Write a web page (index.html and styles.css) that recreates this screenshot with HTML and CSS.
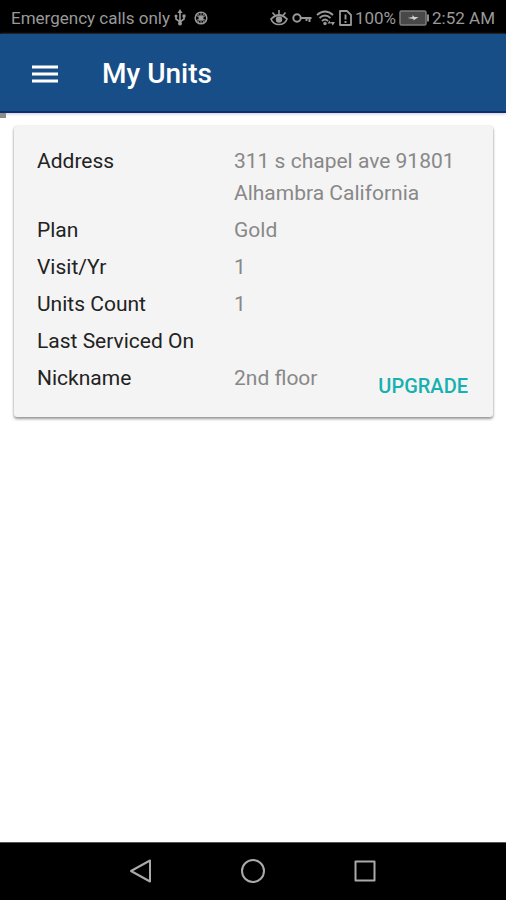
FILE: index.html
```html
<!DOCTYPE html>
<html lang="en">
<head>
<meta charset="utf-8">
<meta name="viewport" content="width=device-width, initial-scale=1">
<title>My Units</title>
<link rel="stylesheet" href="styles.css">
</head>
<body>
<div class="status-bar">
  <div class="status-group status-left">
    <span>Emergency calls only</span>
    <svg class="icon-usb" width="12" height="18" viewBox="0 0 12 18" aria-hidden="true"><path d="M6 3v11M2 7v3l4 3 4-3V7" fill="none" stroke="currentColor" stroke-width="1.6"/><path d="M6 0l2.500 4h-5z" fill="currentColor"/><circle cx="2" cy="7" r="1.500" fill="currentColor"/><path d="M8.500 5.500h3v3h-3z" fill="currentColor"/><circle cx="6" cy="14.500" r="2" fill="currentColor"/></svg>
    <svg width="14" height="14" viewBox="0 0 14 14" aria-hidden="true"><circle cx="7" cy="7" r="5.800" fill="none" stroke="currentColor" stroke-width="1.500"/><path d="M7 2v10M2.500 4.500l9 5M2.500 9.500l9-5M4 3l6 8M10 3l-6 8" stroke="currentColor" stroke-width="1.200" opacity=".8"/><circle cx="7" cy="7" r="2.500" fill="currentColor"/></svg>
  </div>
  <div class="status-group status-right">
    <div class="status-group status-icons">
      <svg width="18" height="16" viewBox="0 0 18 16" aria-hidden="true"><path d="M1 9q8-8 16 0-2 5.500-8 5.500T1 9z" fill="none" stroke="currentColor" stroke-width="1.700"/><circle cx="9" cy="9.500" r="3.200" fill="currentColor"/><path d="M9 0v4M2.500 2.500l2.500 3M15.500 2.500l-2.500 3" stroke="currentColor" stroke-width="1.600"/></svg>
      <svg width="20" height="12" viewBox="0 0 20 12" aria-hidden="true"><path d="M9 6h10.500M17.500 6v4M14.500 6v3" fill="none" stroke="currentColor" stroke-width="2"/><circle cx="5" cy="6" r="3.700" fill="none" stroke="currentColor" stroke-width="2"/></svg>
      <svg width="19" height="16" viewBox="0 0 19 16" aria-hidden="true"><path d="M1 5q8-7 16 0M3.500 8q5.500-5 11 0M6 11q3-3 6 0" fill="none" stroke="currentColor" stroke-width="1.900"/><circle cx="9" cy="13.500" r="1.700" fill="currentColor"/><path d="M11.500 13.500l2-3 1.500 3zM14.500 12h4.500l-2.200 3.500z" fill="currentColor"/></svg>
      <svg width="13" height="16" viewBox="0 0 13 16" aria-hidden="true"><path d="M1 1h7l4 4v10H1z" fill="none" stroke="currentColor" stroke-width="1.800" stroke-linejoin="round"/><path d="M6.500 4.500v5M6.500 11v2" stroke="currentColor" stroke-width="1.900"/></svg>
    </div>
    <span>100%</span>
    <svg width="30" height="16" viewBox="0 0 30 16" aria-hidden="true"><rect x="1" y="1" width="26" height="14" rx="1.500" fill="#484848" stroke="#7c7c7c" stroke-width="1.500"/><path d="M28 4.500h2v7h-2z" fill="#8c8c8c"/><path d="M8.500 8l5-1V5l2 2h4l-5 3.500V9z" fill="#d0d0d0"/></svg>
    <span>2:52 AM</span>
  </div>
</div>

<header class="app-bar">
  <button class="menu-button" type="button" aria-label="Open menu">
    <svg width="26" height="18" viewBox="0 0 26 18" aria-hidden="true"><path d="M0 2h26M0 9h26M0 16h26" stroke="currentColor" stroke-width="3"/></svg>
  </button>
  <h1 class="title">My Units</h1>
</header>

<main class="content">
  <div class="scroll-mark"></div>
  <section class="card">
    <dl class="details">
      <dt>Address</dt><dd>311 s chapel ave 91801 Alhambra California</dd>
      <dt>Plan</dt><dd>Gold</dd>
      <dt>Visit/Yr</dt><dd>1</dd>
      <dt>Units Count</dt><dd>1</dd>
      <dt>Last Serviced On</dt><dd></dd>
      <dt>Nickname</dt><dd>2nd floor</dd>
    </dl>
    <button class="upgrade" type="button">UPGRADE</button>
  </section>
</main>

<nav class="nav-bar" aria-label="System">
  <button type="button" aria-label="Back"><svg width="24" height="26" viewBox="0 0 24 26" aria-hidden="true"><path d="M21 2.500v21L2 13z"/></svg></button>
  <button type="button" aria-label="Home"><svg width="26" height="26" viewBox="0 0 26 26" aria-hidden="true"><circle cx="13" cy="13" r="11"/></svg></button>
  <button type="button" aria-label="Recent apps"><svg width="24" height="26" viewBox="0 0 24 26" aria-hidden="true"><rect x="2.500" y="3.500" width="19" height="19"/></svg></button>
</nav>
</body>
</html>
```
FILE: styles.css
```css
* {
  box-sizing: border-box;
}

body {
  margin: 0;
  min-height: 100vh;
  display: flex;
  flex-direction: column;
  background: #fff;
  font-family: Roboto, "Liberation Sans", sans-serif;
}

button {
  border: 0;
  padding: 0;
  background: none;
  font: inherit;
  color: inherit;
}

svg {
  display: block;
  flex: none;
}

.status-bar {
  height: 34px;
  padding: 2px 11px 0;
  display: flex;
  align-items: center;
  justify-content: space-between;
  background: #000;
  color: #999;
  font-size: 17px;
  line-height: 32px;
  white-space: nowrap;
}

.status-group {
  display: flex;
  align-items: center;
}

.status-left {
  gap: 8px;
}

.icon-usb {
  margin-left: -4px;
}

.status-right {
  gap: 3px;
}

.status-icons {
  gap: 4px;
}

.app-bar {
  height: 79px;
  padding: 2px 32px 0;
  display: flex;
  align-items: center;
  gap: 44px;
  background: #174e87;
  border-bottom: 2px solid #0d2f6c;
  box-shadow: 0 1px 3px #c8c8dc;
  color: #fff;
}

.title {
  margin: 0;
  font-size: 28px;
  font-weight: 500;
  line-height: 32px;
}

.content {
  flex: 1;
}

.scroll-mark {
  position: absolute;
  width: 6px;
  height: 5px;
  background: #8c8c8c;
}

.card {
  position: relative;
  margin: 13px 13px 0 14px;
  padding: 19px 23px 23px;
  border-radius: 3px;
  background: #f4f4f4;
  box-shadow: 0 2px 3px rgba(0, 0, 0, 0.4), 0 0 2px rgba(0, 0, 0, 0.15);
}

.details {
  margin: 0;
  display: grid;
  grid-template-columns: 197px 1fr;
  row-gap: 5px;
  font-size: 21px;
  line-height: 32px;
}

.details dt {
  color: #222;
}

.details dd {
  margin: 0;
  color: #888;
}

.upgrade {
  position: absolute;
  right: 25px;
  bottom: 15px;
  color: #16b1b0;
  font-size: 20px;
  font-weight: 500;
  line-height: 32px;
}

.nav-bar {
  height: 58px;
  padding-bottom: 2px;
  display: flex;
  align-items: center;
  justify-content: center;
  gap: 87px;
  background: #000;
  border-top: 1px solid #555;
}

.nav-bar svg {
  fill: none;
  stroke: #aaa;
  stroke-width: 2;
  stroke-linejoin: round;
}
```
